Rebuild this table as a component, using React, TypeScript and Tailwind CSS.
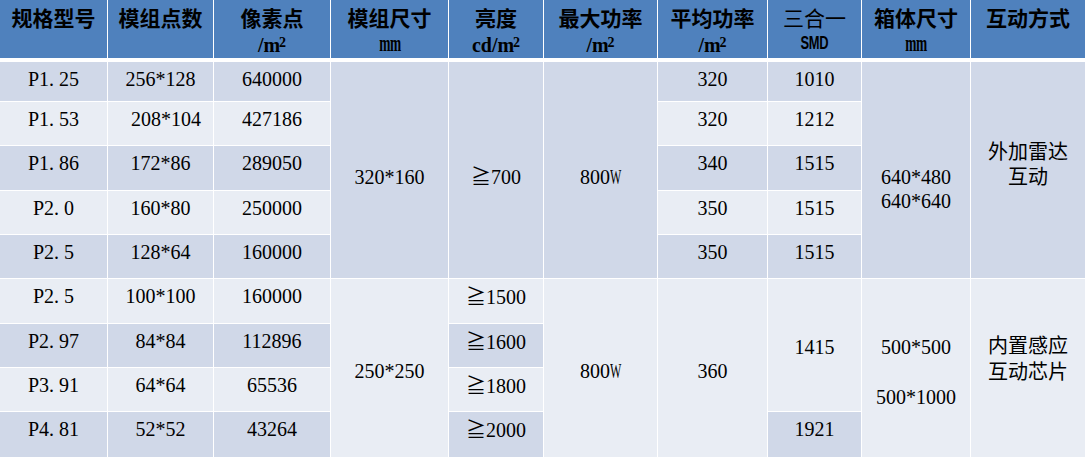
import React from "react";

const COLS =
  "grid grid-cols-[107px_105px_116px_117px_94px_113px_109px_93px_108px_114px]";
const SERIF = "font-['Liberation_Serif','Noto_Sans_CJK_SC',serif]";
const CJK = "font-['Noto_Sans_CJK_SC','Liberation_Serif',sans-serif]";

const DARK = "bg-[#d0d8e8]";
const LIGHT = "bg-[#e9edf4]";

type HeadProps = { title: string; sub?: React.ReactNode; normal?: boolean };

const Head = ({ title, sub, normal }: HeadProps) => (
  <div className="flex flex-col items-center bg-[#4f81bd] pt-[4px] text-black">
    <div className={`${CJK} ${normal ? "font-normal" : "font-bold"} text-[21px] leading-[26px]`}>
      {title}
    </div>
    {sub}
  </div>
);

const Per = ({ pre = "/" }: { pre?: string }) => (
  <div className={`${SERIF} font-bold text-[20px] leading-[26px]`}>
    {pre}
    <span className="tracking-[-1px]">m</span>
    <span className="text-[14px] align-[5px]">2</span>
  </div>
);

const Mm = () => (
  <div
    className={`${SERIF} font-bold text-[24px] leading-[26px] tracking-[-1px] [transform:scaleX(0.56)]`}
  >
    mm
  </div>
);

// W in the picture is a half-width glyph
const Watt = () => (
  <span>
    800
    <span className="inline-block w-[11px] origin-left [transform:scaleX(0.6)]">W</span>
  </span>
);

type CellProps = { className: string; children: React.ReactNode };

const Cell = ({ className, children }: CellProps) => (
  <div className={`${SERIF} text-[20px] leading-[24px] text-black text-center pt-[5px] ${className}`}>
    {children}
  </div>
);

const Merged = ({ className, children }: CellProps) => (
  <div
    className={`${SERIF} flex flex-col items-center justify-center text-[20px] leading-[24px] text-black text-center ${className}`}
  >
    {children}
  </div>
);

const rows = [
  ["P1. 25", "256*128", "640000"],
  ["P1. 53", "208*104", "427186"],
  ["P1. 86", "172*86", "289050"],
  ["P2. 0", "160*80", "250000"],
  ["P2. 5", "128*64", "160000"],
  ["P2. 5", "100*100", "160000"],
  ["P2. 97", "84*84", "112896"],
  ["P3. 91", "64*64", "65536"],
  ["P4. 81", "52*52", "43264"],
];

const rowStart = [
  "row-start-1",
  "row-start-2",
  "row-start-3",
  "row-start-4",
  "row-start-5",
  "row-start-6",
  "row-start-7",
  "row-start-8",
  "row-start-9",
];

const bandOf = (i: number) => (i % 2 === 0 ? DARK : LIGHT);

export default function App() {
  return (
    <div className="w-[1085px] h-[457px] bg-white flex flex-col gap-[4px] overflow-hidden">
      <div className={`${COLS} gap-x-px h-[58px]`}>
        <Head title="规格型号" />
        <Head title="模组点数" />
        <Head title="像素点" sub={<Per />} />
        <Head title="模组尺寸" sub={<Mm />} />
        <Head title="亮度" sub={<Per pre="cd/" />} />
        <Head title="最大功率" sub={<Per />} />
        <Head title="平均功率" sub={<Per />} />
        <Head
          title="三合一"
          normal
          sub={
            <div className="font-['Liberation_Sans',sans-serif] font-bold text-[19px] leading-[26px] tracking-[-0.5px] [transform:scaleX(0.68)]">
              SMD
            </div>
          }
        />
        <Head title="箱体尺寸" sub={<Mm />} />
        <Head title="互动方式" />
      </div>

      <div
        className={`${COLS} gap-px grid-rows-[39px_43px_44px_43px_43px_44px_43px_43px_45px]`}
      >
        {rows.map((r, i) => (
          <React.Fragment key={i}>
            <Cell className={`col-start-1 ${rowStart[i]} ${bandOf(i)}`}>{r[0]}</Cell>
            <Cell className={`col-start-2 ${rowStart[i]} ${bandOf(i)} ${i === 1 ? "pl-[11px]" : ""}`}>
              {r[1]}
            </Cell>
            <Cell className={`col-start-3 ${rowStart[i]} ${bandOf(i)}`}>{r[2]}</Cell>
          </React.Fragment>
        ))}

        {/* group 1: P1.25 - P2.5 */}
        <Merged className={`col-start-4 row-start-1 row-span-5 ${DARK} pt-[13px]`}>320*160</Merged>
        <Merged className={`col-start-5 row-start-1 row-span-5 ${DARK} pt-[13px]`}>
          <span>
            <span className={CJK}>≧</span>700
          </span>
        </Merged>
        <Merged className={`col-start-6 row-start-1 row-span-5 ${DARK} pt-[13px]`}>
          <Watt />
        </Merged>
        {["320", "320", "340", "350", "350"].map((v, i) => (
          <Cell key={`a${i}`} className={`col-start-7 ${rowStart[i]} ${bandOf(i)}`}>
            {v}
          </Cell>
        ))}
        {["1010", "1212", "1515", "1515", "1515"].map((v, i) => (
          <Cell key={`s${i}`} className={`col-start-8 ${rowStart[i]} ${bandOf(i)}`}>
            {v}
          </Cell>
        ))}
        <Merged className={`col-start-9 row-start-1 row-span-5 ${DARK} pt-[38px] leading-[23px]`}>
          <div>
            640*480
            <br />
            640*640
          </div>
        </Merged>
        <Merged className={`col-start-10 row-start-1 row-span-5 ${DARK} pb-[15px]`}>
          <div className={`${CJK} leading-[25px]`}>
            外加雷达
            <br />
            互动
          </div>
        </Merged>

        {/* group 2: P2.5 - P4.81 */}
        <Merged className={`col-start-4 row-start-6 row-span-4 ${LIGHT} pt-[5px]`}>250*250</Merged>
        {["1500", "1600", "1800", "2000"].map((v, i) => (
          <Cell key={`b${i}`} className={`col-start-5 ${rowStart[i + 5]} ${bandOf(i + 5)}`}>
            <span className={CJK}>≧</span>
            {v}
          </Cell>
        ))}
        <Merged className={`col-start-6 row-start-6 row-span-4 ${LIGHT} pt-[5px]`}>
          <Watt />
        </Merged>
        <Merged className={`col-start-7 row-start-6 row-span-4 ${LIGHT} pt-[5px]`}>360</Merged>
        <Merged className={`col-start-8 row-start-6 row-span-3 ${LIGHT} pt-[3px]`}>1415</Merged>
        <Cell className={`col-start-8 row-start-9 ${DARK}`}>1921</Cell>
        <Merged className={`col-start-9 row-start-6 row-span-4 ${LIGHT} pt-[7px] gap-[26px]`}>
          <div>500*500</div>
          <div>500*1000</div>
        </Merged>
        <Merged className={`col-start-10 row-start-6 row-span-4 ${LIGHT} pb-[21px]`}>
          <div className={`${CJK} leading-[26px]`}>
            内置感应
            <br />
            互动芯片
          </div>
        </Merged>
      </div>
    </div>
  );
}
